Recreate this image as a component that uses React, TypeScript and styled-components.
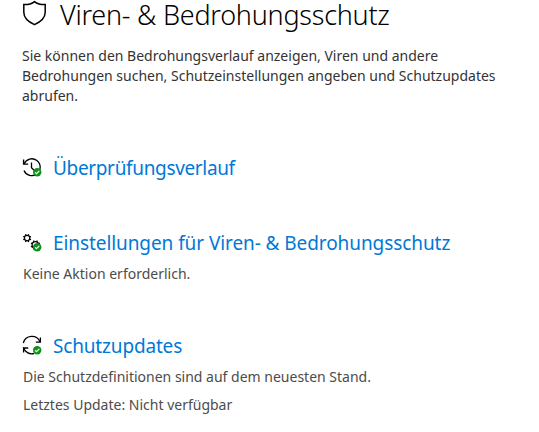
import React from 'react';
import styled, { createGlobalStyle } from 'styled-components';

const GlobalStyle = createGlobalStyle`
  * { box-sizing: border-box; }
  body { margin: 0; background: #fff; font-family: 'Noto Sans', sans-serif; }
`;

const Page = styled.main`
  display: flex;
  flex-direction: column;
  height: 432px;
  padding-left: 22px;
`;

const TitleRow = styled.header`
  display: flex;
  align-items: flex-start;
  gap: 13px;
  height: 46px;
`;

const Title = styled.h1`
  margin: 0;
  font-size: 27px;
  font-weight: 350;
  line-height: 30px;
  letter-spacing: -0.25px;
  white-space: nowrap;
  color: #000;
`;

const Description = styled.p`
  width: 490px;
  margin: 0;
  font-size: 14px;
  line-height: 20px;
  color: #333;
`;

const Section = styled.section<{ $offset: number }>`
  margin-top: ${(p) => p.$offset}px;
`;

const SectionLink = styled.a<{ $tracking: number }>`
  display: flex;
  align-items: center;
  gap: 11px;
  height: 28px;
  font-size: 19px;
  line-height: 28px;
  letter-spacing: ${(p) => p.$tracking}px;
  white-space: nowrap;
  color: #0078d7;
`;

const Status = styled.p<{ $gap: number }>`
  margin: ${(p) => p.$gap}px 0 0 1px;
  font-size: 14px;
  line-height: 20px;
  white-space: nowrap;
  color: #4c4c4c;
`;

const Icon = styled.svg`
  display: block;
  flex: none;
  overflow: visible;
  fill: none;
  stroke: #000;
`;

const OkBadge = () => (
  <g>
    <circle cx="15.2" cy="14.2" r="4.2" fill="#10911c" stroke="none" />
    <path d="M13.1 14.3l1.4 1.4 2.8-2.9" stroke="#fff" strokeWidth="1.2" />
  </g>
);

const ShieldIcon = () => (
  <Icon width="25" height="27" viewBox="0 0 25 27" strokeWidth="1.5">
    <path d="M12.5 1.6C15 3.6 19 4.7 23.2 4.6V12.2C23.2 17.8 18.6 21.8 12.5 24.6C6.4 21.8 1.8 17.8 1.8 12.2V4.6C6 4.7 10 3.6 12.5 1.6Z" />
  </Icon>
);

const HistoryIcon = () => (
  <Icon width="20" height="20" viewBox="0 0 20 20" strokeWidth="1.3">
    <path d="M2 6A8.4 8.4 0 1 1 2 12.4" />
    <path d="M1.6 1.6v4.5h4.6" strokeWidth="1.4" />
    <path d="M9.5 4.4v5.4l2.8 2.6" />
    <OkBadge />
  </Icon>
);

const Gear = ({ x, y, r }: { x: number; y: number; r: number }) => (
  <g transform={`translate(${x} ${y})`}>
    <circle r={r} strokeWidth="1.2" />
    {[0, 45, 90, 135, 180, 225, 270, 315].map((a) => (
      <path key={a} d={`M0 ${-r - 0.3}v-1.2`} strokeWidth="1.3" transform={`rotate(${a + 22.5})`} />
    ))}
  </g>
);

const GearsIcon = () => (
  <Icon width="20" height="20" viewBox="0 0 20 20">
    <Gear x={5.1} y={5.1} r={2.7} />
    <Gear x={13.4} y={12} r={3.3} />
    <OkBadge />
  </Icon>
);

const UpdateIcon = () => (
  <Icon width="20" height="20" viewBox="0 0 20 20" strokeWidth="1.3">
    <path d="M1.3 7A8.8 8.8 0 0 1 18 5.8" />
    <path d="M18.4 1.6v4.6h-4.6" />
    <path d="M1.4 11.4A8.8 8.8 0 0 0 12 17.5" />
    <path d="M1.6 16.6v-4.6h4.6" />
    <OkBadge />
  </Icon>
);

export default function App() {
  return (
    <Page>
      <GlobalStyle />
      <TitleRow>
        <ShieldIcon />
        <Title>Viren- &amp; Bedrohungsschutz</Title>
      </TitleRow>
      <Description>
        Sie können den Bedrohungsverlauf anzeigen, Viren und andere
        <br />
        Bedrohungen suchen, Schutzeinstellungen angeben und Schutzupdates abrufen.
      </Description>
      <Section $offset={48}>
        <SectionLink $tracking={-0.34}>
          <HistoryIcon />
          Überprüfungsverlauf
        </SectionLink>
      </Section>
      <Section $offset={47}>
        <SectionLink $tracking={-0.08}>
          <GearsIcon />
          Einstellungen für Viren- &amp; Bedrohungsschutz
        </SectionLink>
        <Status $gap={7}>Keine Aktion erforderlich.</Status>
      </Section>
      <Section $offset={48}>
        <SectionLink $tracking={-0.17}>
          <UpdateIcon />
          Schutzupdates
        </SectionLink>
        <Status $gap={7}>Die Schutzdefinitionen sind auf dem neuesten Stand.</Status>
        <Status $gap={8}>Letztes Update: Nicht verfügbar</Status>
      </Section>
    </Page>
  );
}
